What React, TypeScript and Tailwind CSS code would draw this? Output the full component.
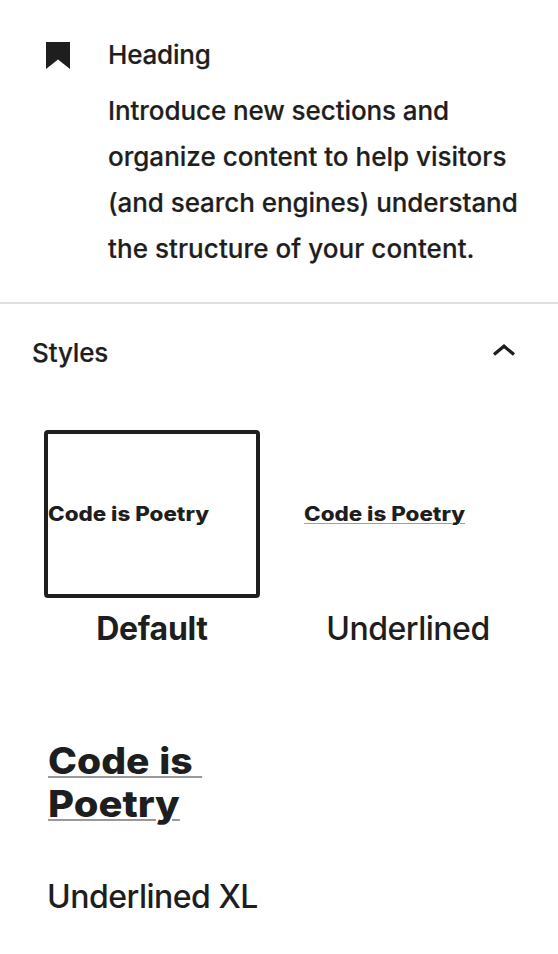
import React from "react";

const lines = [
  { text: "Introduce new sections and", tracking: "tracking-[-0.08px]" },
  { text: "organize content to help visitors", tracking: "tracking-normal" },
  { text: "(and search engines) understand", tracking: "tracking-[-0.06px]" },
  { text: "the structure of your content.", tracking: "tracking-[0.07px]" },
];

export default function App() {
  return (
    <main className="h-[954px] w-[558px] overflow-hidden bg-white font-['Inter',sans-serif] text-[#1e1e1e]">
      <section className="flex h-[304px] border-b-2 border-[#e0e0e0] pl-[46px]">
        <svg className="mt-[42px] h-[27px] w-6 shrink-0" viewBox="0 0 24 27" fill="#1e1e1e">
          <path d="M0 0h24v27L12 17.5 0 27Z" />
        </svg>
        <div className="pt-[38px] pl-[38px] text-[26px] font-medium whitespace-nowrap [-webkit-text-stroke:0.2px_#1e1e1e]">
          <h2 className="h-[50px] leading-[34px] tracking-[-0.2px]">Heading</h2>
          {lines.map((l) => (
            <p key={l.text} className={`h-[46px] leading-[46px] ${l.tracking}`}>{l.text}</p>
          ))}
        </div>
      </section>
      <section>
        <div className="flex h-24 items-center justify-between pr-[42px] pl-8 text-[26px] font-medium">
          <h2 className="tracking-[-0.15px] [-webkit-text-stroke:0.2px_#1e1e1e]">Styles</h2>
          <svg className="mb-1.5 h-3.5 w-6" viewBox="0 0 24 14" fill="none" stroke="#1e1e1e" strokeWidth="3.2">
            <path d="m2 12.6 10-8.4 10 8.4" />
          </svg>
        </div>
        <div className="flex gap-10 pt-[30px] pl-11 text-[32px]">
          <div className="w-[216px]">
            <div className="flex h-[168px] items-center rounded-[4px] border-4 border-[#1e1e1e] pt-0.5 text-[19.5px] font-extrabold whitespace-nowrap">
              <span className="origin-left scale-x-[1.148]">Code is Poetry</span>
            </div>
            <p className="mt-[7px] text-center leading-[48px] font-bold tracking-[-0.3px]">Default</p>
          </div>
          <div className="w-[216px]">
            <div className="flex h-[168px] items-center border-4 border-transparent pt-0.5 text-[19.5px] font-extrabold whitespace-nowrap">
              <span className="origin-left scale-x-[1.148] underline decoration-[#a0a0a0] decoration-1 underline-offset-[2px]">Code is Poetry</span>
            </div>
            <p className="mt-[7px] text-center leading-[48px] font-[450] tracking-[-0.5px]">Underlined</p>
          </div>
        </div>
        <div className="pt-[86px] pl-12 text-[37px] leading-[43px] font-extrabold">
          <p className="origin-left scale-x-[1.055] underline decoration-[#999999] decoration-2 underline-offset-[2px] [word-spacing:1px]">{"Code is\u00a0"}</p>
          <p className="origin-left scale-x-[1.08] underline decoration-[#999999] decoration-2 underline-offset-[2px]">Poetry</p>
        </div>
        <p className="mt-12 pl-[47px] text-[32px] leading-[48px] font-[450] tracking-[-0.5px]">Underlined XL</p>
      </section>
    </main>
  );
}
